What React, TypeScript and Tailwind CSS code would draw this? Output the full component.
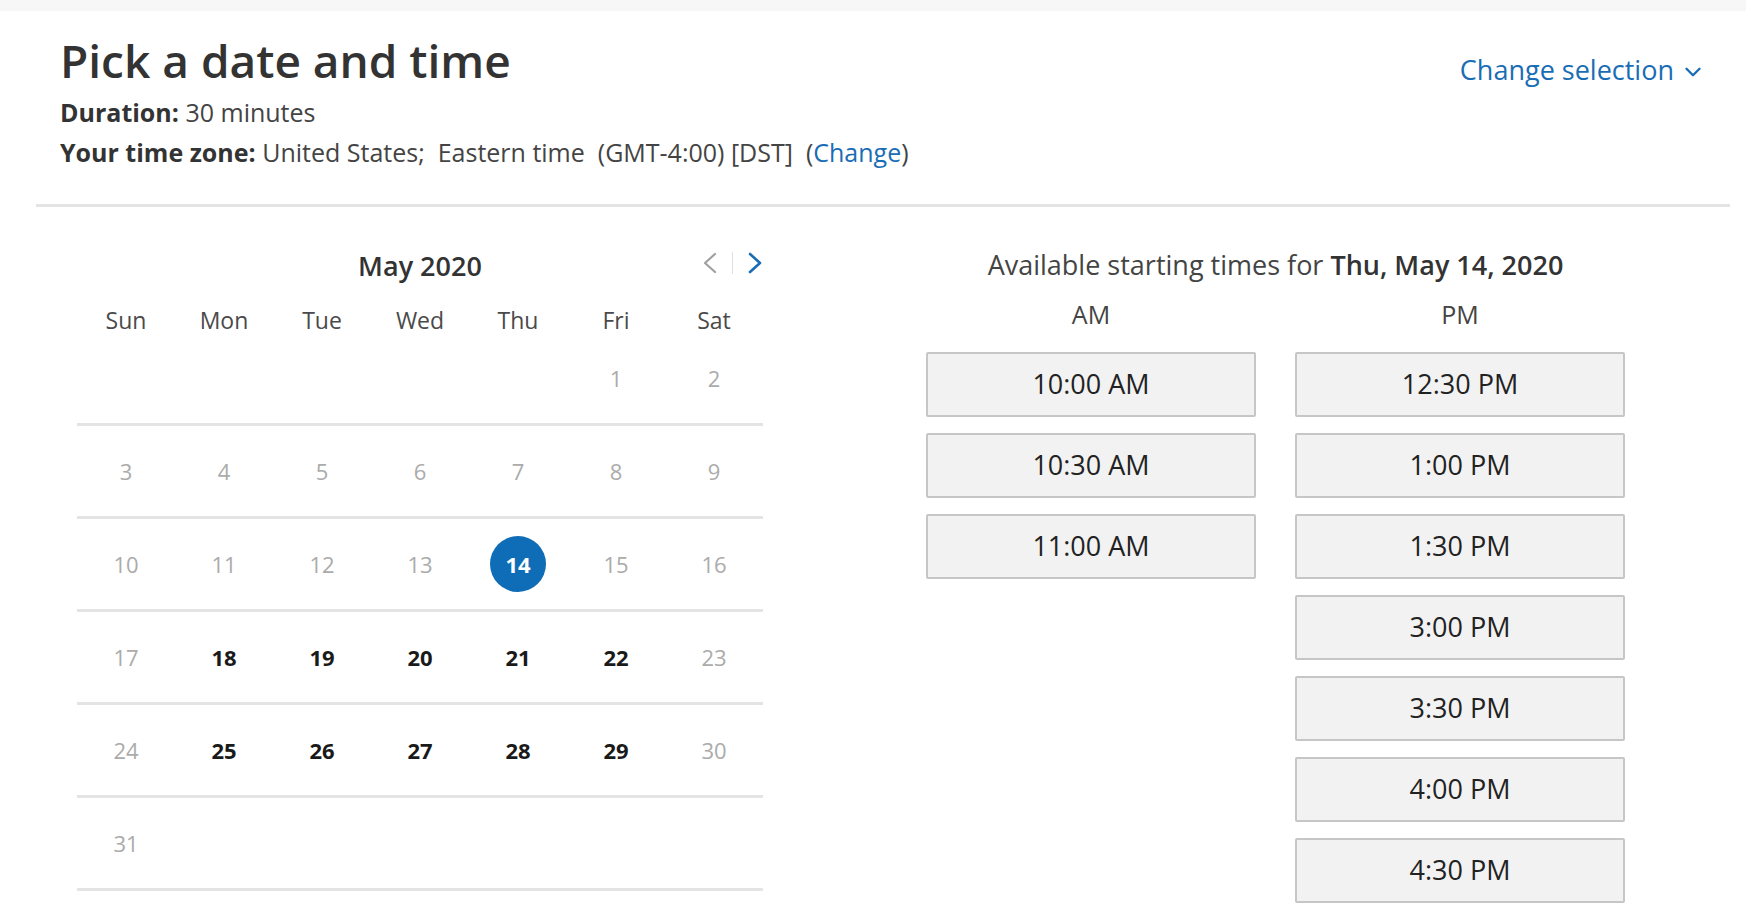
import { ChevronDown } from "lucide-react";

const weeks: (number | null)[][] = [
  [null, null, null, null, null, 1, 2],
  [3, 4, 5, 6, 7, 8, 9],
  [10, 11, 12, 13, 14, 15, 16],
  [17, 18, 19, 20, 21, 22, 23],
  [24, 25, 26, 27, 28, 29, 30],
  [31, null, null, null, null, null, null],
];

const available = [18, 19, 20, 21, 22, 25, 26, 27, 28, 29];
const selected = 14;

const amTimes = ["10:00 AM", "10:30 AM", "11:00 AM"];
const pmTimes = ["12:30 PM", "1:00 PM", "1:30 PM", "3:00 PM", "3:30 PM", "4:00 PM", "4:30 PM"];

function DayCell({ day }: { day: number | null }) {
  if (day === null) return <div />;
  if (day === selected) {
    return (
      <div className="flex items-center justify-center">
        <span className="flex h-[56px] w-[56px] items-center justify-center rounded-full bg-[#0f6cb6] text-[22px] font-bold text-white">
          {day}
        </span>
      </div>
    );
  }
  const isAvailable = available.includes(day);
  return (
    <div
      className={`flex items-center justify-center text-[22px] ${
        isAvailable ? "font-bold text-[#1a1a1a]" : "text-[#ababab]"
      }`}
    >
      {day}
    </div>
  );
}

function TimeButton({ label }: { label: string }) {
  return (
    <button className="flex h-[65px] w-full items-center justify-center rounded-[2px] border-2 border-[#c6c6c6] bg-[#f2f2f2] text-[27px] text-[#222]">
      {label}
    </button>
  );
}

export default function App() {
  return (
    <div className="min-h-screen overflow-hidden bg-white font-['Open_Sans',sans-serif] text-[#333]">
      <div className="h-[11px] bg-[#f7f7f7]" />

      <div className="pl-[36px] pr-[16px]">
        {/* Header */}
        <div className="flex justify-between pl-[24px] pr-[24px] pt-[21px]">
          <div>
            <h1 className="text-[46px] font-semibold leading-[56px] text-[#333]">Pick a date and time</h1>
            <p className="mt-[4px] text-[25px] leading-[40px] text-[#444]">
              <span className="font-bold text-[#333]">Duration:</span> 30 minutes
            </p>
            <p className="whitespace-pre text-[25px] leading-[40px] text-[#444]">
              <span className="font-bold text-[#333]">Your time zone:</span> United States;  Eastern time  (GMT-4:00) [DST]  (
              <span className="text-[#1a6db5]">Change</span>)
            </p>
          </div>
          <button className="mt-[22px] flex h-[32px] items-center gap-[6px] text-[27px] leading-[32px] text-[#1a6db5]">
            Change selection
            <ChevronDown className="mt-[3px] h-[26px] w-[26px]" strokeWidth={2.2} />
          </button>
        </div>

        <div className="mt-[32px] h-[3px] bg-[#e4e4e4]" />

        {/* Body */}
        <div className="flex">
          {/* Calendar */}
          <div className="ml-[41px] w-[686px]">
            <div className="relative mt-[39px] flex h-[40px] items-center justify-center">
              <span className="text-[27px] font-semibold text-[#333]">May 2020</span>
              <div className="absolute right-0 top-[-3px] flex h-full items-center gap-[14px]">
                <svg width="16" height="22" viewBox="0 0 16 22" fill="none">
                  <polyline points="13,2 3,11 13,20" stroke="#a0a0a0" strokeWidth="2.2" strokeLinecap="round" strokeLinejoin="round" />
                </svg>
                <span className="h-[22px] w-[1px] bg-[#e0e0e0]" />
                <svg width="16" height="22" viewBox="0 0 16 22" fill="none">
                  <polyline points="3,2 13,11 3,20" stroke="#1a6db5" strokeWidth="2.6" strokeLinecap="round" strokeLinejoin="round" />
                </svg>
              </div>
            </div>

            <div className="mt-[17px] grid h-[30px] grid-cols-7 items-center text-center text-[23px] text-[#4a4a4a]">
              {["Sun", "Mon", "Tue", "Wed", "Thu", "Fri", "Sat"].map((d) => (
                <div key={d}>{d}</div>
              ))}
            </div>

            {weeks.map((week, i) => (
              <div key={i} className="grid h-[93px] grid-cols-7 border-b-[3px] border-[#e4e4e4]">
                {week.map((day, j) => (
                  <DayCell key={j} day={day} />
                ))}
              </div>
            ))}
          </div>

          {/* Times */}
          <div className="ml-[163px] w-[699px]">
            <p className="mt-[42px] whitespace-nowrap text-center text-[27px] leading-[32px] text-[#444]">
              Available starting times for <span className="font-semibold text-[#333]">Thu, May 14, 2020</span>
            </p>
            <div className="mt-[19px] grid grid-cols-2 gap-x-[39px]">
              <div>
                <div className="flex h-[30px] items-center justify-center text-[25px] text-[#444]">AM</div>
                <div className="mt-[22px] flex flex-col gap-[16px]">
                  {amTimes.map((t) => (
                    <TimeButton key={t} label={t} />
                  ))}
                </div>
              </div>
              <div>
                <div className="flex h-[30px] items-center justify-center text-[25px] text-[#444]">PM</div>
                <div className="mt-[22px] flex flex-col gap-[16px]">
                  {pmTimes.map((t) => (
                    <TimeButton key={t} label={t} />
                  ))}
                </div>
              </div>
            </div>
          </div>
        </div>
      </div>
    </div>
  );
}
